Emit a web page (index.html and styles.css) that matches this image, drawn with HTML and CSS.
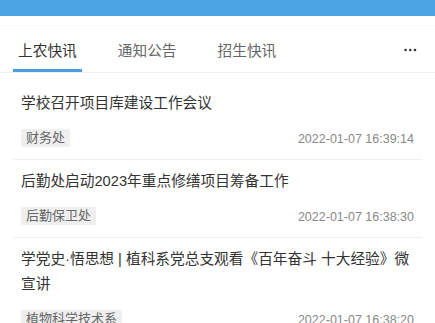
FILE: index.html
```html
<!DOCTYPE html>
<html lang="zh-CN">
<head>
  <meta charset="UTF-8" />
  <meta name="viewport" content="width=device-width, initial-scale=1.0"/>
  <title>上农快讯</title>
  <link rel="stylesheet" href="styles.css">
</head>
<body>
  <div class="top-bar"></div>

  <!-- Tabs -->
  <div class="tab-bar">
    <div class="tabs">
      <span class="tab active">上农快讯</span>
      <span class="tab">通知公告</span>
      <span class="tab">招生快讯</span>
    </div>
    <span class="more">
      <svg width="13" height="4" viewBox="0 0 13 4">
        <circle cx="1.6" cy="2" r="1.3" fill="#333"/>
        <circle cx="6.3" cy="2" r="1.3" fill="#333"/>
        <circle cx="11" cy="2" r="1.3" fill="#333"/>
      </svg>
    </span>
  </div>

  <!-- News list -->
  <div class="news-list">
    <div class="news-item">
      <p class="news-title">学校召开项目库建设工作会议</p>
      <div class="news-meta">
        <span class="tag">财务处</span>
        <span class="date">2022-01-07 16:39:14</span>
      </div>
    </div>
    <div class="news-item">
      <p class="news-title">后勤处启动2023年重点修缮项目筹备工作</p>
      <div class="news-meta">
        <span class="tag">后勤保卫处</span>
        <span class="date">2022-01-07 16:38:30</span>
      </div>
    </div>
    <div class="news-item">
      <p class="news-title">学党史·悟思想 | 植科系党总支观看《百年奋斗 十大经验》微宣讲</p>
      <div class="news-meta">
        <span class="tag">植物科学技术系</span>
        <span class="date">2022-01-07 16:38:20</span>
      </div>
    </div>
  </div>
</body>
</html>
```

FILE: styles.css
```css
* {
  margin: 0;
  padding: 0;
  box-sizing: border-box;
  font-family: "Liberation Sans", "Noto Sans CJK SC", sans-serif;
}

body {
  background: #fff;
  width: 435px;
  overflow: hidden;
}

.top-bar {
  height: 16px;
  background-color: #4ba3e3;
}

.tab-bar {
  margin-top: 9px;
  border-top: 1px solid #f7f7f7;
  border-bottom: 1px solid #f2f2f2;
  height: 48px;
  display: flex;
  align-items: stretch;
  justify-content: space-between;
  padding: 0 18px 0 13px;
}

.tabs {
  display: flex;
  gap: 31px;
}

.tab {
  display: flex;
  align-items: center;
  padding: 0 5px;
  font-size: 14.7px;
  color: #666;
  border-bottom: 3px solid transparent;
  padding-top: 3px;
}

.tab.active {
  color: #333;
  border-bottom-color: #4a9fe0;
}

.more {
  display: flex;
  align-items: center;
  padding-top: 2px;
}

.more svg {
  display: block;
}

.news-list {
  margin: 0 13px;
  padding-top: 9px;
}

.news-item {
  padding: 9px 8px 12px;
  border-bottom: 1px solid #f0f0f0;
}

.news-title {
  font-size: 14.7px;
  line-height: 25px;
  color: #333;
}

.news-meta {
  margin-top: 13px;
  display: flex;
  justify-content: space-between;
  align-items: center;
}

.tag {
  height: 18px;
  line-height: 18px;
  padding: 0 5px;
  font-size: 13px;
  color: #666;
  background-color: #efefef;
  border-radius: 2px;
}

.date {
  font-size: 12.5px;
  color: #888;
  padding-top: 1px;
}
```
